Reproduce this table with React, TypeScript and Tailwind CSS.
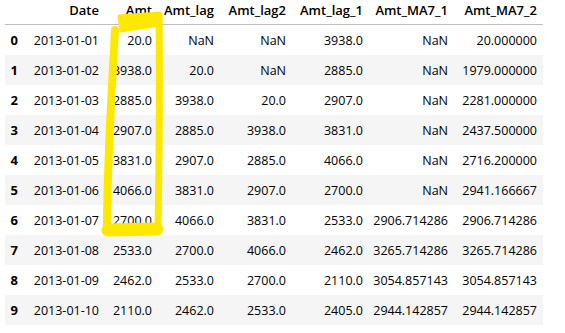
import React from 'react';

const columns = ['', 'Date', 'Amt', 'Amt_lag', 'Amt_lag2', 'Amt_lag_1', 'Amt_MA7_1', 'Amt_MA7_2'];

const rows: string[][] = [
  ['0', '2013-01-01', '20.0', 'NaN', 'NaN', '3938.0', 'NaN', '20.000000'],
  ['1', '2013-01-02', '3938.0', '20.0', 'NaN', '2885.0', 'NaN', '1979.000000'],
  ['2', '2013-01-03', '2885.0', '3938.0', '20.0', '2907.0', 'NaN', '2281.000000'],
  ['3', '2013-01-04', '2907.0', '2885.0', '3938.0', '3831.0', 'NaN', '2437.500000'],
  ['4', '2013-01-05', '3831.0', '2907.0', '2885.0', '4066.0', 'NaN', '2716.200000'],
  ['5', '2013-01-06', '4066.0', '3831.0', '2907.0', '2700.0', 'NaN', '2941.166667'],
  ['6', '2013-01-07', '2700.0', '4066.0', '3831.0', '2533.0', '2906.714286', '2906.714286'],
  ['7', '2013-01-08', '2533.0', '2700.0', '4066.0', '2462.0', '3265.714286', '3265.714286'],
  ['8', '2013-01-09', '2462.0', '2533.0', '2700.0', '2110.0', '3054.857143', '3054.857143'],
  ['9', '2013-01-10', '2110.0', '2462.0', '2533.0', '2405.0', '2944.142857', '2944.142857'],
];

const grid = 'grid grid-cols-[19px_81px_53px_62px_72px_77px_85px_89px]';

// yellow marker drawn round the Amt column
function Highlight() {
  return (
    <svg className="absolute left-0 top-0 pointer-events-none" width="565" height="333">
      <g stroke="#ffe800" fill="none" strokeLinecap="round" strokeLinejoin="round">
        <path d="M119,16 L160,13 L160,25 L121,31 Z" fill="#ffe800" strokeWidth="3" />
        <path d="M115,30 C112,90 107,160 107,230" strokeWidth="8" />
        <path d="M108,230 L157,229" strokeWidth="13" />
        <path d="M159,16 C160,90 159,170 158,231" strokeWidth="7" />
      </g>
    </svg>
  );
}

export default function App() {
  return (
    <div className="relative w-[565px] h-[333px] bg-white overflow-hidden font-['Open_Sans',sans-serif] text-[12.5px] text-black">
      <div className="pl-[5px]">
        <div className={`${grid} h-[25px] w-[538px] border-b border-[#bdbdbd] font-semibold text-[13px]`}>
          {columns.map((c, i) => (
            <div key={i} className="pr-[6px] text-right leading-[21px]">{c}</div>
          ))}
        </div>
        {rows.map((r, ri) => (
          <div key={ri} className={`${grid} h-[30px] w-[538px] items-center ${ri % 2 === 1 ? 'bg-[#f5f5f5]' : 'bg-white'}`}>
            {r.map((v, ci) => (
              <div key={ci} className={`pr-[6px] text-right pt-[2px] ${ci === 0 ? 'font-bold text-[13px]' : ''}`}>{v}</div>
            ))}
          </div>
        ))}
      </div>
      <Highlight />
    </div>
  );
}
